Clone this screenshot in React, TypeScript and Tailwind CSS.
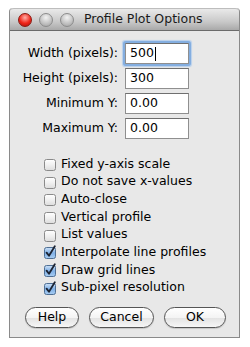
import React from "react";

const font = { fontFamily: '"DejaVu Sans", "Liberation Sans", sans-serif' };

function Check({ checked }: { checked: boolean }) {
  return (
    <svg width="14" height="14" viewBox="0 0 14 14" className="shrink-0">
      <defs>
        <linearGradient id={checked ? "cbOn" : "cbOff"} x1="0" y1="0" x2="0" y2="1">
          {checked ? (
            <>
              <stop offset="0" stopColor="#cfe2f7" />
              <stop offset="0.5" stopColor="#7fb0e6" />
              <stop offset="1" stopColor="#a9cdf2" />
            </>
          ) : (
            <>
              <stop offset="0" stopColor="#ffffff" />
              <stop offset="0.5" stopColor="#f0f0f0" />
              <stop offset="1" stopColor="#dcdcdc" />
            </>
          )}
        </linearGradient>
      </defs>
      <rect x="1.5" y="2.5" width="11" height="11" rx="2" fill={`url(#${checked ? "cbOn" : "cbOff"})`} stroke={checked ? "#4f6f94" : "#8a8a8a"} strokeWidth="1" />
      {checked && (
        <path d="M3.6 7.6 L6 10.8 L11.8 1.2" fill="none" stroke="#1c2433" strokeWidth="1.8" strokeLinecap="round" strokeLinejoin="round" />
      )}
    </svg>
  );
}

function Field({ label, value, focused }: { label: string; value: string; focused?: boolean }) {
  return (
    <div className="flex items-center h-[25px]">
      <div className="w-[109px] text-right pr-[1px] text-[12.5px] text-black leading-none">{label}</div>
      <div
        className={
          "ml-[6px] w-[64px] h-[21px] bg-white flex items-center pl-[4px] text-[12.5px] text-black border border-[#8f8f8f] border-t-[#6f6f6f] " +
          (focused ? "shadow-[0_0_0_2px_#84aee0,0_0_1px_3px_#b8d0ec] rounded-[1px]" : "")
        }
      >
        {value}
        {focused && <span className="w-[1px] h-[14px] bg-black ml-[1px]" />}
      </div>
    </div>
  );
}

function Btn({ label, w }: { label: string; w: string }) {
  return (
    <div
      className={
        w +
        " h-[21px] rounded-full border border-[#555] bg-[linear-gradient(#ffffff,#f4f4f4_50%,#e2e2e2_51%,#f6f6f6)] flex items-center justify-center text-[12.5px] text-black shadow-[0_1px_1px_rgba(0,0,0,0.15)]"
      }
    >
      {label}
    </div>
  );
}

export default function App() {
  const checks: [string, boolean][] = [
    ["Fixed y-axis scale", false],
    ["Do not save x-values", false],
    ["Auto-close", false],
    ["Vertical profile", false],
    ["List values", false],
    ["Interpolate line profiles", true],
    ["Draw grid lines", true],
    ["Sub-pixel resolution", true],
  ];
  return (
    <div className="w-[250px] h-[347px] bg-white pt-[8px] pl-[9px]" style={font}>
      <div className="w-[231px] h-[330px] border border-[#8a8a8a] border-t-0 bg-[#e8e8e8] flex flex-col rounded-t-[4px] overflow-hidden">
        <div className="h-[23px] shrink-0 bg-[linear-gradient(#e9e9e9,#c9c9c9_60%,#a9a9a9)] border-b border-[#6b6b6b] flex items-center rounded-t-[4px] border-t border-t-[#bdbdbd]">
          <div className="ml-[8px] w-[14px] h-[14px] rounded-full bg-[radial-gradient(circle_at_50%_30%,#ffb0a8,#f0261a_55%,#a8120c)] border border-[#8a1a12]" />
          <div className="ml-[7px] w-[14px] h-[14px] rounded-full bg-[radial-gradient(circle_at_50%_30%,#f2f2f2,#c4c4c4_55%,#9e9e9e)] border border-[#8c8c8c]" />
          <div className="ml-[7px] w-[14px] h-[14px] rounded-full bg-[radial-gradient(circle_at_50%_30%,#f2f2f2,#c4c4c4_55%,#9e9e9e)] border border-[#8c8c8c]" />
          <div className="ml-[10px] text-[12.5px] text-[#1a1a1a] leading-none">Profile Plot Options</div>
        </div>
        <div className="flex flex-col pt-[10px]">
          <Field label="Width (pixels):" value="500" focused />
          <Field label="Height (pixels):" value="300" />
          <Field label="Minimum Y:" value="0.00" />
          <Field label="Maximum Y:" value="0.00" />
        </div>
        <div className="flex flex-col pt-[14px] pl-[33px]">
          {checks.map(([l, c]) => (
            <div key={l} className="flex items-center h-[17.7px] gap-[4px]">
              <Check checked={c} />
              <span className="text-[12.5px] text-black leading-none">{l}</span>
            </div>
          ))}
        </div>
        <div className="flex pl-[15px] gap-[10px] mt-[10px]">
          <Btn label="Help" w="w-[54px]" />
          <Btn label="Cancel" w="w-[65px]" />
          <Btn label="OK" w="w-[62px]" />
        </div>
      </div>
    </div>
  );
}
